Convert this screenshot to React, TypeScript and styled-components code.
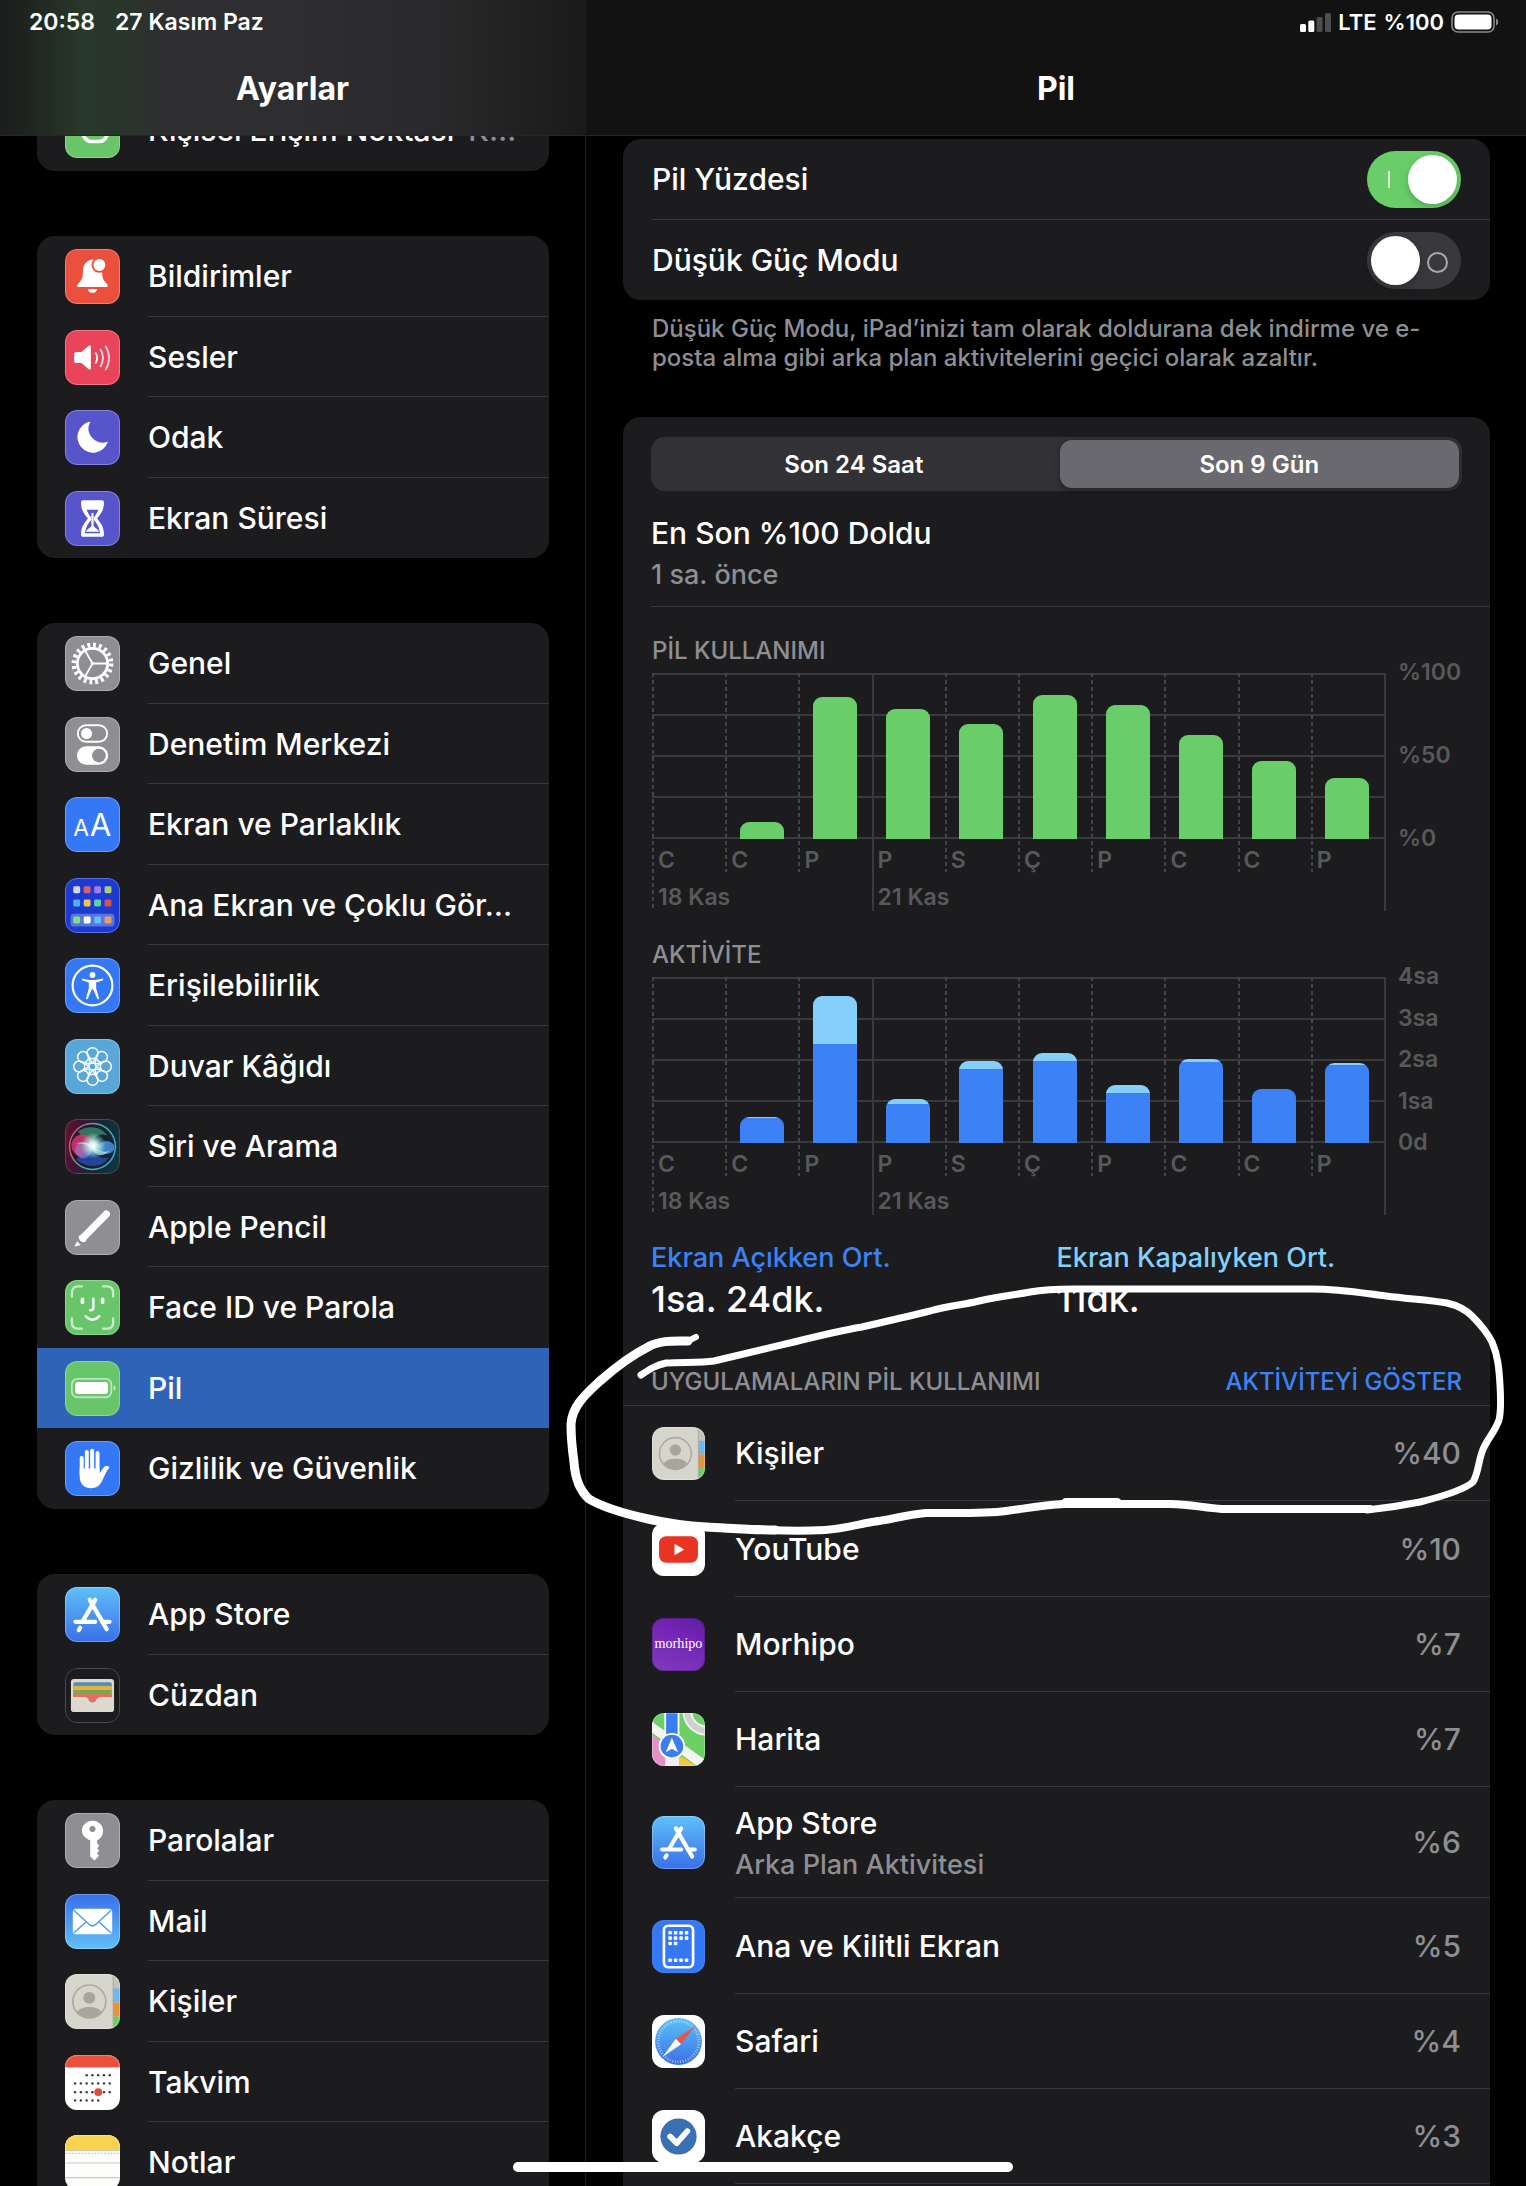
import React from "react";
import styled, { createGlobalStyle, css } from "styled-components";

const color = {
  card: "#1c1c1e",
  line: "#38383a",
  grey: "#8e8e93",
  dim: "#59595c",
  green: "#69ce6a",
  blue: "#3c82f6",
  sky: "#84cffb",
};

const GlobalStyle = createGlobalStyle`
  * { box-sizing: border-box; }
  body {
    margin: 0;
    background: #000;
    color: #fff;
    font-family: Inter, "Liberation Sans", sans-serif;
    font-weight: 550;
    -webkit-font-smoothing: antialiased;
  }
  h1, h2, h3, p, ul, dl, dd { margin: 0; padding: 0; font: inherit; }
  ul { list-style: none; }
  button { border: 0; background: none; padding: 0; font: inherit; cursor: pointer; }
  a { color: inherit; text-decoration: none; }
`;

/* ---------- frame ---------- */

const Screen = styled.div`
  position: relative;
  display: flex;
  height: 100vh;
  overflow: hidden;
`;

const Sidebar = styled.nav`
  position: relative;
  flex: 0 1 586px;
  min-width: 0;
  overflow: hidden;
  border-right: 1px solid #1f1f21;
`;

const Pane = styled.main`
  position: relative;
  flex: 1;
  min-width: 0;
  overflow: hidden;
`;

const Bar = styled.header`
  position: absolute;
  inset: 0 0 auto;
  z-index: 2;
  height: 136px;
  display: flex;
  flex-direction: column;
  border-bottom: 1px solid #262628;
`;

const SidebarBar = styled(Bar)`
  background: linear-gradient(
    to right,
    #1b1e1c 0,
    #1f2520 30px,
    #28382a 82px,
    #29362b 120px,
    #2e2f30 160px,
    #2e2e30 300px,
    #29292b 440px,
    #1f1f20 540px,
    #1a1a1b 100%
  );
`;

const PaneBar = styled(Bar)`
  background: #121212;
`;

const Status = styled.div<{ $end?: boolean }>`
  display: flex;
  align-items: center;
  height: 44px;
  padding: 0 27px 0 29px;
  gap: ${(p) => (p.$end ? 7 : 20)}px;
  justify-content: ${(p) => (p.$end ? "flex-end" : "flex-start")};
  font-size: ${(p) => (p.$end ? 22 : 23)}px;
  font-weight: 600;
`;

const BarTitle = styled.h1`
  flex: 1;
  padding-top: 26px;
  text-align: center;
  font-size: 32px;
  font-weight: 700;
  line-height: 38px;
`;

const Scroll = styled.div<{ $top: number }>`
  display: flex;
  flex-direction: column;
  padding: ${(p) => p.$top}px 36px 0 37px;
`;

const SidebarScroll = styled(Scroll)`
  gap: 65px;
`;

const Card = styled.ul`
  border-radius: 18px;
  background: ${color.card};
  overflow: hidden;
`;

/* ---------- rows ---------- */

const Body = styled.span<{ $line: boolean }>`
  display: flex;
  flex: 1;
  min-width: 0;
  align-self: stretch;
  align-items: center;
  padding-right: 29px;
  border-bottom: 1px solid ${(p) => (p.$line ? color.line : "transparent")};
`;

const Item = styled.li`
  height: 80px;
  &:nth-child(odd) {
    height: 81px;
  }
`;

const RowLink = styled.a<{ $active?: boolean }>`
  display: flex;
  align-items: center;
  gap: 28px;
  height: 100%;
  padding-left: 28px;
  font-size: 30px;
  line-height: 36px;
  background: ${(p) => (p.$active ? "#2e63b8" : "transparent")};
`;

const Label = styled.span`
  white-space: nowrap;
`;

const Hint = styled.span`
  margin-left: 14px;
  color: ${color.grey};
`;

const Tile = styled.span<{ $bg: string; $size: number; $rim?: string }>`
  position: relative;
  display: block;
  flex: none;
  width: ${(p) => p.$size}px;
  height: ${(p) => p.$size}px;
  border-radius: 12px;
  overflow: hidden;
  background: ${(p) => p.$bg};
  svg {
    display: block;
    width: 100%;
    height: 100%;
  }
  &::after {
    content: "";
    position: absolute;
    inset: 0;
    border-radius: inherit;
    border: 1px solid ${(p) => p.$rim ?? "rgba(255,255,255,0.28)"};
  }
`;

/* ---------- switches ---------- */

const ToggleRow = styled.label`
  display: flex;
  align-items: center;
  height: 80px;
  margin-left: 29px;
  padding-right: 29px;
  font-size: 30px;
  justify-content: space-between;
  cursor: pointer;
`;

const ToggleItem = styled.li`
  & + & ${ToggleRow} {
    height: 81px;
    border-top: 1px solid ${color.line};
  }
`;

const Switch = styled.input`
  appearance: none;
  position: relative;
  width: 94px;
  height: 57px;
  margin: 0;
  border-radius: 29px;
  background: #39393d;
  cursor: pointer;
  &::before {
    content: "";
    position: absolute;
    top: 20px;
    right: 13px;
    width: 17px;
    height: 17px;
    border: 2px solid #a9a9ad;
    border-radius: 50%;
  }
  &::after {
    content: "";
    position: absolute;
    top: 4px;
    left: 4px;
    width: 49px;
    height: 49px;
    border-radius: 50%;
    background: #fff;
    box-shadow: 0 3px 8px rgba(0, 0, 0, 0.2);
  }
  &:checked {
    background: ${color.green};
  }
  &:checked::before {
    left: 21px;
    right: auto;
    width: 2px;
    border: 0;
    border-radius: 0;
    background: #d9f5d9;
  }
  &:checked::after {
    left: 41px;
  }
`;

const Footnote = styled.p`
  margin: 14px 0 45px;
  padding: 0 29px;
  color: ${color.grey};
  font-size: 24px;
  line-height: 29px;
`;

/* ---------- battery card ---------- */

const Report = styled.section`
  padding: 20px 0 60px;
  border-radius: 18px 18px 0 0;
  background: ${color.card};
`;

const Inset = styled.div`
  padding: 0 28px 0 29px;
`;

const Segments = styled.div`
  display: flex;
  gap: 6px;
  height: 54px;
  margin: 0 28px;
  padding: 3px;
  border-radius: 14px;
  background: #323136;
`;

const Segment = styled.label`
  flex: 1;
  display: flex;
  align-items: center;
  justify-content: center;
  border-radius: 12px;
  font-size: 24px;
  font-weight: 600;
  cursor: pointer;
  &:has(input:checked) {
    background: #6a696f;
    box-shadow: 0 2px 6px rgba(0, 0, 0, 0.3);
  }
`;

const HiddenRadio = styled.input`
  appearance: none;
  width: 0;
  height: 0;
  margin: 0;
`;

const LastCharge = styled.div`
  margin-left: 28px;
  padding: 24px 0 16px;
  border-bottom: 1px solid ${color.line};
`;

const Strong = styled.h2`
  font-size: 30px;
  line-height: 36px;
`;

const Sub = styled.p`
  margin-top: 9px;
  color: ${color.grey};
  font-size: 27px;
  line-height: 30px;
`;

const Caption = styled.h3`
  color: ${color.grey};
  font-size: 24px;
  line-height: 24px;
`;

const Chart = styled.div`
  padding-top: 32px;
`;

const ChartGrid = styled.div`
  display: grid;
  grid-template-columns: 1fr 76px;
  margin-top: 10px;
`;

const Plot = styled.div`
  display: grid;
  grid-template-columns: repeat(10, 1fr);
  align-items: start;
  height: 238px;
  border-right: 2px solid #3a3a3c;
  background: repeating-linear-gradient(to bottom, #3a3a3c 0 2px, transparent 2px 41px) 0 0 / 100% 166px no-repeat;
`;

const solidRule = css`
  background: linear-gradient(#3a3a3c, #3a3a3c) 0 0 / 2px 100% no-repeat;
`;
const dashedRule = css`
  background: repeating-linear-gradient(to bottom, #454548 0 4px, transparent 4px 7px) 0 0 / 2px 100% no-repeat;
`;

const Day = styled.div<{ $tall: boolean; $solid: boolean }>`
  min-width: 0;
  height: ${(p) => (p.$tall ? 238 : 199)}px;
  color: ${color.dim};
  font-size: 23px;
  font-weight: 600;
  white-space: nowrap;
  ${(p) => (p.$solid ? solidRule : dashedRule)}
`;

const Slot = styled.div`
  display: flex;
  align-items: flex-end;
  justify-content: center;
  height: 166px;
  margin-bottom: 8px;
`;

const Stack = styled.div`
  width: 60%;
  border-radius: 9px 9px 0 0;
  overflow: hidden;
`;

const DayName = styled.div`
  padding-left: 6px;
  line-height: 26px;
`;

const DayDate = styled(DayName)`
  margin-top: 11px;
`;

const Axis = styled.div`
  display: flex;
  flex-direction: column;
  justify-content: space-between;
  height: 190px;
  margin-top: -13px;
  padding-left: 12px;
  color: ${color.dim};
  font-size: 23px;
  font-weight: 600;
  line-height: 24px;
`;

const Averages = styled.dl`
  display: grid;
  grid-template-columns: 1fr 1fr;
  padding: 28px 28px 0;
`;

const AverageName = styled.dt<{ $tone: string }>`
  color: ${(p) => p.$tone};
  font-size: 27px;
  line-height: 30px;
`;

const AverageValue = styled.dd`
  margin-top: 8px;
  font-size: 36px;
  line-height: 36px;
`;

const UsageHead = styled.div`
  display: flex;
  justify-content: space-between;
  margin-top: 53px;
  padding: 0 28px 11px;
  border-bottom: 1px solid ${color.line};
`;

const TextButton = styled.button`
  color: ${color.blue};
  font-size: 24px;
  line-height: 24px;
`;

const AppRow = styled.li<{ $tall: boolean }>`
  display: flex;
  align-items: center;
  gap: 30px;
  height: ${(p) => (p.$tall ? 111 : 95)}px;
  padding-left: 29px;
  font-size: 30px;
  line-height: 36px;
  &:nth-child(4n + 2) {
    height: 96px;
  }
`;

const AppText = styled.span`
  flex: 1;
  min-width: 0;
`;

const Share = styled.span`
  color: ${color.grey};
`;

const HomeBar = styled.div`
  position: absolute;
  z-index: 4;
  bottom: 14px;
  left: 50%;
  width: 500px;
  height: 10px;
  margin-left: -250px;
  border-radius: 5px;
  background: #fff;
`;

const Marker = styled.svg`
  position: absolute;
  z-index: 3;
  top: 1270px;
  left: 560px;
  width: 960px;
  height: 280px;
  pointer-events: none;
  fill: none;
  stroke: #fff;
  stroke-linecap: round;
  stroke-linejoin: round;
`;

/* ---------- icons, each on a 60 x 60 field ---------- */

type Art = { bg: string; rim?: string; art: React.ReactNode };

const dots = (points: number[][], fill: string, r: number) =>
  points.map(([x, y]) => <circle key={`${x}-${y}`} cx={x} cy={y} r={r} fill={fill} />);

const homeDots = [
  ["#d5d6e6", "#d7607f", "#a877f2", "#a8cf69"],
  ["#4fb0f0", "#f2c255", "#62cfa8", "#dd5148"],
  ["#7fe08a", "#ffffff", "#62c3fa", "#eb9f62"],
];

const calendarDots: number[][] = [];
[
  [22, [2, 3, 4, 5, 6]],
  [31, [0, 1, 2, 3, 4, 5, 6]],
  [40.5, [0, 1, 2, 3, 5, 6]],
  [49.5, [0, 1, 2, 3, 4]],
].forEach(([y, cols]) => (cols as number[]).forEach((c) => calendarDots.push([11 + c * 6.3, y as number])));

const icons: Record<string, Art> = {
  hotspot: {
    bg: "#68c56a",
    art: (
      <g fill="none" stroke="#fff" strokeWidth="4" strokeLinecap="round">
        <rect x="20" y="24" width="26" height="18" rx="9" />
        <rect x="14" y="16" width="26" height="18" rx="9" />
      </g>
    ),
  },
  bell: {
    bg: "#eb4f3e",
    art: (
      <g fill="#fff">
        <path d="M30 11.5c-6.5 1-10.5 6-10.5 12.500c0 7-.8 9.500-4.500 13.300-1.200 1.200-1.700 2-1.700 2.800 0 .9.700 1.400 1.600 1.400h30.200c.9 0 1.600-.5 1.600-1.400 0-.8-.5-1.600-1.700-2.800-3.700-3.800-4.500-6.300-4.500-13.300 0-6.500-4-11.500-10.500-12.500z" />
        <path d="M25 43.500h10c-.4 2.700-2.500 4.300-5 4.300s-4.600-1.600-5-4.300z" />
        <circle cx="37.500" cy="17.500" r="8.500" fill="#eb4f3e" />
        <circle cx="37.500" cy="17.500" r="6.500" />
      </g>
    ),
  },
  sound: {
    bg: "#ea445a",
    art: (
      <g>
        <path d="M10 26.500c0-1.500.8-2.500 2.500-2.500h5.500l7.500-6.500c1.500-1.200 2.700-.6 2.700 1v23c0 1.600-1.200 2.200-2.700 1l-7.500-6.500h-5.500c-1.700 0-2.500-1-2.500-2.500z" fill="#fff" />
        <g fill="none" stroke="#fff" strokeWidth="2" strokeLinecap="round">
          <path d="M33.500 25c2 3 2 8 0 11" opacity=".95" />
          <path d="M38.800 21.500c3.500 5 3.500 13 0 18" opacity=".85" />
          <path d="M44.500 18c4.700 7.500 4.700 17.500 0 25" opacity=".75" />
        </g>
      </g>
    ),
  },
  moon: {
    bg: "#5855cb",
    art: <path d="M27.300 13.300c.6-.3.4-.6-.4-.4A17 17 0 1 0 46.500 35.500c.4-.9 0-1-.8-.6A15.500 15.500 0 0 1 27.300 13.300z" fill="#fff" />,
  },
  hourglass: {
    bg: "#5855cb",
    art: (
      <g>
        <path d="M20 10h20c1.600 0 2.500 1 2.500 2.400 0 7.600-2.500 11.500-7.500 17.600 5 6.100 7.500 10 7.500 17.600 0 1.400-.9 2.400-2.500 2.400h-20c-1.600 0-2.500-1-2.500-2.400 0-7.600 2.500-11.500 7.500-17.600-5-6.100-7.500-10-7.500-17.600 0-1.400.9-2.400 2.500-2.400z" fill="#fff" />
        <path d="M23.500 20.500h13c-1.200 3-3 6-5 8.500v2.500c3.500 4 6 8 6.700 14.500h-16.400c.7-6.500 3.200-10.500 6.700-14.500v-2.500c-2-2.500-3.800-5.500-5-8.500z" fill="#5855cb" />
        <path d="M28.800 24h2.400v14c1 2.500 5 3.500 6 6.500h-14.400c1-3 5-4 6-6.500z" fill="#fff" />
      </g>
    ),
  },
  gear: {
    bg: "#8e8e93",
    art: (
      <g fill="none" stroke="#fff">
        <circle cx="30" cy="30" r="16.500" strokeWidth="3" />
        <circle cx="30" cy="30" r="20.300" strokeWidth="5" strokeDasharray="3.190 3.188" />
        <g strokeWidth="2">
          <path d="M30 30h16M30 30l-8-14M30 30l-8 14" />
        </g>
        <circle cx="30" cy="30" r="2" fill="#fff" stroke="none" />
      </g>
    ),
  },
  control: {
    bg: "#8e8e93",
    art: (
      <g>
        <rect x="14" y="9" width="32" height="18" rx="9" fill="none" stroke="#fff" strokeWidth="2" />
        <circle cx="23.500" cy="18" r="6" fill="#fff" />
        <rect x="13" y="32" width="34" height="20" rx="10" fill="#fff" />
        <circle cx="37" cy="42" r="7.500" fill="#8e8e93" />
      </g>
    ),
  },
  display: {
    bg: "#3478f6",
    art: (
      <g fill="#fff" fontFamily="Inter, sans-serif" fontWeight="400">
        <text x="9" y="43" fontSize="25">A</text>
        <text x="27" y="43" fontSize="34">A</text>
      </g>
    ),
  },
  home: {
    bg: "#1d3bd1",
    art: (
      <g>
        <rect x="6" y="39" width="48" height="14" rx="4" fill="#5a75de" />
        {homeDots.map((row, r) =>
          row.map((fill, c) => (
            <rect key={`${r}${c}`} x={9 + c * 11.400} y={[9, 23.500, 42][r]} width="7.500" height="7.500" rx="1.500" fill={fill} />
          )),
        )}
      </g>
    ),
  },
  access: {
    bg: "#3478f6",
    art: (
      <g>
        <circle cx="30" cy="30" r="21.700" fill="none" stroke="#fff" strokeWidth="2.400" />
        <circle cx="30" cy="18.500" r="3.200" fill="#fff" />
        <path d="M19.500 22.500l7.500 1.500h6l7.500-1.500c1.400-.2 1.700 1.600.3 2l-6.800 2.200v6.300l3 10.500c.4 1.500-1.500 2-2 .7l-4.300-10.200h-1.400l-4.300 10.200c-.5 1.300-2.400.8-2-.7l3-10.500v-6.300l-6.800-2.200c-1.400-.4-1.100-2.200.3-2z" fill="#fff" />
      </g>
    ),
  },
  wallpaper: {
    bg: "#58a7d8",
    art: (
      <g fill="none" stroke="#fff" strokeWidth="1.600">
        {[0, 45, 90, 135, 180, 225, 270, 315].map((a) => (
          <g key={a} transform={`rotate(${a} 30 30)`}>
            <circle cx="30" cy="15.500" r="6" />
            <path d="M30 26l-4.500-6.500M30 26l4.500-6.500" />
          </g>
        ))}
        <circle cx="30" cy="30" r="3.800" />
      </g>
    ),
  },
  siri: {
    bg: "linear-gradient(100deg, #6d1030 0%, #3a1436 28%, #14293a 62%, #0d3a42 100%)",
    rim: "#4a4a50",
    art: (
      <g>
        <defs>
          <radialGradient id="siriCore">
            <stop offset="0" stopColor="#fff" />
            <stop offset=".3" stopColor="#dff" stopOpacity=".9" />
            <stop offset="1" stopColor="#8fd" stopOpacity="0" />
          </radialGradient>
          <linearGradient id="siriRing" x1="0" y1=".2" x2="1" y2=".6">
            <stop offset="0" stopColor="#e0486c" />
            <stop offset=".5" stopColor="#4fb58d" />
            <stop offset="1" stopColor="#4aa5d8" />
          </linearGradient>
        </defs>
        <circle cx="30" cy="30" r="25" fill="#12202c" fillOpacity=".6" stroke="url(#siriRing)" strokeWidth="1.600" />
        <path d="M14 14c10-8 26-6 32 4-9-3-14 0-17 12z" fill="#3e9a77" opacity=".7" />
        <ellipse cx="19" cy="29" rx="12" ry="12" fill="#d83470" opacity=".85" />
        <ellipse cx="45" cy="31" rx="9" ry="7" fill="#4a8fe6" opacity=".85" />
        <path d="M12 44c8 8 26 12 36-2-10 2-14-2-18-10z" fill="#2b58d0" opacity=".65" />
        <ellipse cx="20" cy="34" rx="9" ry="9" fill="#8ea4e8" opacity=".45" />
        <path d="M11 27c10-3 16 0 20 3 6 4 10 8 18 4-8 9-16 6-20-2-4-4-10-6-18-5z" fill="#dff" opacity=".6" />
        <circle cx="31" cy="29" r="14" fill="url(#siriCore)" />
      </g>
    ),
  },
  pencil: {
    bg: "#8e8e93",
    art: (
      <g fill="#fff">
        <path d="M19.500 41.500L45 15.500" stroke="#fff" strokeWidth="8" strokeLinecap="round" />
        <path d="M14.500 40.500l2-3 7 7-3.200 1.800z" />
        <path d="M13.200 45l4 4-5.700 1.700c-.7.100-1-.2-.8-.9z" />
      </g>
    ),
  },
  face: {
    bg: "#68c56a",
    art: (
      <g fill="none" stroke="#fff" strokeLinecap="round">
        <g strokeWidth="2.600" opacity=".65">
          <path d="M7.500 18v-4q0-7 7-7h4M41.500 7h4q7 0 7 7v4M52.500 42v4q0 7-7 7h-4M18.500 53h-4q-7 0-7-7v-4" />
        </g>
        <path d="M19 21v3.500M41 21v3.500" strokeWidth="4" />
        <path d="M31 20.500v9.500q0 3-3.500 3" strokeWidth="2.600" />
        <path d="M22.500 39.500q7.500 7.500 15 0" strokeWidth="2.600" />
      </g>
    ),
  },
  battery: {
    bg: "#68c56a",
    art: (
      <g>
        <rect x="7.500" y="19.500" width="43" height="20" rx="6" fill="none" stroke="#fff" strokeOpacity=".55" strokeWidth="2" />
        <rect x="11" y="23" width="36" height="13" rx="3" fill="#fff" />
        <path d="M53 26.500c3 1 3 5 0 6z" fill="#fff" opacity=".6" />
      </g>
    ),
  },
  hand: {
    bg: "#3478f6",
    art: (
      <g>
        <path d="M18.200 18.500v18M23.800 12v20M29.600 10.500v20M35.500 13v20" stroke="#fff" strokeWidth="4.300" strokeLinecap="round" />
        <path d="M16 30h21.600v5c1.800-1.600 3.300-4.500 5.200-6.800 1.500-1.600 4.800-1.200 5.400.3.300.8-.4 1.300-1 2-3.200 4-4.700 9.300-7.200 14-2.600 4.800-6 7-11.500 7-8.500 0-12.500-5.500-12.500-13z" fill="#fff" />
      </g>
    ),
  },
  store: {
    bg: "linear-gradient(#5fc0f8, #3a6fe8)",
    art: (
      <g stroke="#fff" strokeWidth="4.600" strokeLinecap="round" fill="none">
        <path d="M27 14l18.500 32" />
        <path d="M33 14L19.500 37" />
        <path d="M16.500 44.500L15 47" />
        <path d="M11.500 38h21.500M40.500 38h8" />
      </g>
    ),
  },
  wallet: {
    bg: "#1c1c1e",
    rim: "#4a4a4d",
    art: (
      <g>
        <rect x="6.500" y="12" width="47" height="36" rx="3.500" fill="#dcdad0" />
        <rect x="9" y="15.500" width="42" height="10" rx="2" fill="#4f8fb8" />
        <rect x="9" y="19.500" width="42" height="8" fill="#e8b03c" />
        <rect x="9" y="24" width="42" height="8" fill="#6fae50" />
        <rect x="9" y="28" width="42" height="5" fill="#e07060" />
        <path d="M6.500 31.500h13c3.500 0 5 0 6 2.500.9 2.400 2.500 3.500 4.500 3.500s3.600-1.100 4.500-3.500c1-2.500 2.500-2.500 6-2.500h13v13q0 3.500-3.500 3.500h-40q-3.500 0-3.500-3.500z" fill="#dcdad0" />
        <path d="M19 31.500c3.500 0 5.500 0 6.500 2.500.9 2.400 2.500 3.500 4.500 3.500s3.600-1.100 4.500-3.500c1-2.500 3-2.500 6.500-2.500z" fill="#e07060" />
      </g>
    ),
  },
  key: {
    bg: "#8e8e93",
    art: (
      <g>
        <path d="M30 8.500c6.600 0 11.500 4.700 11.500 11 0 4.700-2.500 8.500-6.500 10.200v3.300l2.500 2.700-2.500 2.800 2.300 2.700-2.600 3 2.500 2.500-5 5-4.700-4.300v-17.700c-4.500-1.700-9-5.500-9-10.200 0-6.300 4.900-11 11.500-11z" fill="#fff" />
        <circle cx="30" cy="17.500" r="3.300" fill="#8e8e93" />
      </g>
    ),
  },
  mail: {
    bg: "linear-gradient(#3a6fe8, #5fc0f8)",
    art: (
      <g>
        <rect x="8.500" y="16" width="43" height="28" rx="3.500" fill="#fff" />
        <path d="M9.500 17.500l16 15q4.500 4.500 9 0l16-15M9.500 42.500l14-12.500M50.500 42.500l-14-12.500" fill="none" stroke="#4f9bf0" strokeWidth="1.600" />
      </g>
    ),
  },
  contacts: {
    bg: "#d6d5cb",
    art: (
      <g>
        <rect x="52.500" width="8" height="15.500" fill="#c3c2b9" />
        <rect x="52.500" y="15.500" width="8" height="15.500" fill="#6db8ee" />
        <rect x="52.500" y="31" width="8" height="15.500" fill="#e8923a" />
        <rect x="52.500" y="46.500" width="8" height="14" fill="#6ace66" />
        <path d="M52.500 0v60" stroke="#a9a79e" strokeWidth="1" />
        <circle cx="26.500" cy="30" r="18" fill="none" stroke="#aeaaa2" strokeWidth="1.800" />
        <circle cx="26.500" cy="26" r="6.500" fill="#a9a49c" />
        <path d="M13 41.500c3-4 8-5.500 13.500-5.500s10.500 1.500 13.500 5.500c-3.500 4.200-8 6.500-13.500 6.500s-10-2.300-13.500-6.500z" fill="#a9a49c" />
      </g>
    ),
  },
  calendar: {
    bg: "#fff",
    art: (
      <g>
        <rect width="60" height="13.500" fill="#eb4f3e" />
        {dots(calendarDots, "#333", 1.3)}
        <circle cx="36.300" cy="40.500" r="4.200" fill="#e0483a" />
      </g>
    ),
  },
  notes: {
    bg: "#fdfdfb",
    art: (
      <g>
        <rect width="60" height="16" fill="#f8d34f" />
        <path d="M0 16.500h60" stroke="#b9a86a" strokeWidth="1" />
        <path d="M1 20h58" stroke="#bbb" strokeWidth="1.500" strokeDasharray="1.500 2" />
        <path d="M0 30.500h60M0 46.500h60" stroke="#c9c9c9" strokeWidth="1.200" />
      </g>
    ),
  },
  youtube: {
    bg: "#fff",
    art: (
      <g>
        <rect x="8" y="15" width="44" height="30" rx="8" fill="#e93323" />
        <path d="M25.500 23.500l11 6.500-11 6.500z" fill="#fff" />
      </g>
    ),
  },
  morhipo: {
    bg: "linear-gradient(205deg, #5b1fa0, #7524b5 35%, #7f3bbd)",
    rim: "rgba(0,0,0,0.15)",
    art: (
      <text x="30" y="34" fill="#fff" fontSize="16" fontWeight="400" fontFamily="Liberation Serif, serif" textAnchor="middle">
        morhipo
      </text>
    ),
  },
  maps: {
    bg: "#6bd165",
    art: (
      <g>
        <path d="M0 24l30 26v10h-30z" fill="#e58fc4" />
        <path d="M0 10l60 43v7h-9l-51-38z" fill="#f4f3f1" />
        <path d="M15 40h16v20h-16z" fill="#f1eff0" />
        <path d="M31 50h4l15 10h-19z" fill="#f4c73f" />
        <circle cx="62" cy="-2" r="22" fill="none" stroke="#f4f3f1" strokeWidth="11" />
        <circle cx="62" cy="-2" r="22" fill="none" stroke="#cfd0d2" strokeWidth="7" />
        <rect x="14" y="-2" width="17" height="30" fill="#fff" />
        <rect x="16" y="-2" width="13" height="30" fill="#3b7ef4" />
        <circle cx="22.500" cy="37.500" r="15" fill="#fff" />
        <circle cx="22.500" cy="37.500" r="12.800" fill="#3b7ef4" />
        <path d="M22.500 28l7 16.500-7-4-7 4z" fill="#fff" />
      </g>
    ),
  },
  lock: {
    bg: "#3478f6",
    rim: "#4080f0",
    art: (
      <g>
        <rect x="13.500" y="6.500" width="33" height="47" rx="5" fill="none" stroke="#fff" strokeWidth="3" />
        {[12.5, 18.5, 24.5, 43.5].map((y, r) =>
          [0, 1, 2, 3]
            .slice(0, r === 2 ? 2 : 4)
            .map((c) => <rect key={`${y}${c}`} x={18.5 + c * 6.2} y={y} width="4" height="4" rx="1" fill="#fff" />),
        )}
      </g>
    ),
  },
  safari: {
    bg: "#fff",
    art: (
      <g>
        <defs>
          <linearGradient id="safariDial" x1="0" y1="0" x2="0" y2="1">
            <stop offset="0" stopColor="#5cc1f7" />
            <stop offset="1" stopColor="#3b6fe6" />
          </linearGradient>
        </defs>
        <circle cx="30" cy="30" r="26.500" fill="url(#safariDial)" />
        <circle cx="30" cy="30" r="23" fill="none" stroke="#fff" strokeOpacity=".55" strokeWidth="3" strokeDasharray="1 2" />
        <path d="M49 12.500L32.800 33.200 27 27z" fill="#e5554b" />
        <path d="M12 47.500L27 27l5.800 6.200z" fill="#fff" />
      </g>
    ),
  },
  akakce: {
    bg: "#fff",
    art: (
      <g>
        <circle cx="30" cy="30" r="20.500" fill="#3a6fb2" />
        <path d="M20.500 30l7.500 7.500L40 24" fill="none" stroke="#fff" strokeWidth="6.500" strokeLinecap="round" strokeLinejoin="round" />
      </g>
    ),
  },
};

function Icon({ name, size }: { name: string; size: number }) {
  const { bg, rim, art } = icons[name];
  return (
    <Tile $bg={bg} $rim={rim} $size={size}>
      <svg viewBox="0 0 60 60" aria-hidden="true">
        {art}
      </svg>
    </Tile>
  );
}

/* ---------- data ---------- */

const groups: { icon: string; label: string; hint?: string }[][] = [
  [{ icon: "hotspot", label: "Kişisel Erişim Noktası", hint: "K…" }],
  [
    { icon: "bell", label: "Bildirimler" },
    { icon: "sound", label: "Sesler" },
    { icon: "moon", label: "Odak" },
    { icon: "hourglass", label: "Ekran Süresi" },
  ],
  [
    { icon: "gear", label: "Genel" },
    { icon: "control", label: "Denetim Merkezi" },
    { icon: "display", label: "Ekran ve Parlaklık" },
    { icon: "home", label: "Ana Ekran ve Çoklu Gör…" },
    { icon: "access", label: "Erişilebilirlik" },
    { icon: "wallpaper", label: "Duvar Kâğıdı" },
    { icon: "siri", label: "Siri ve Arama" },
    { icon: "pencil", label: "Apple Pencil" },
    { icon: "face", label: "Face ID ve Parola" },
    { icon: "battery", label: "Pil" },
    { icon: "hand", label: "Gizlilik ve Güvenlik" },
  ],
  [
    { icon: "store", label: "App Store" },
    { icon: "wallet", label: "Cüzdan" },
  ],
  [
    { icon: "key", label: "Parolalar" },
    { icon: "mail", label: "Mail" },
    { icon: "contacts", label: "Kişiler" },
    { icon: "calendar", label: "Takvim" },
    { icon: "notes", label: "Notlar" },
  ],
];

const days = ["C", "C", "P", "P", "S", "Ç", "P", "C", "C", "P"];
const dates: Record<number, string> = { 0: "18 Kas", 3: "21 Kas" };

const level = [0, 10, 86, 79, 70, 87, 81, 63, 47, 37].map((v) => [v]);

/* minutes with the screen off, then on */
const activity = [
  [0, 0],
  [1, 37],
  [70, 144],
  [7, 57],
  [12, 107],
  [11, 119],
  [11, 72],
  [5, 118],
  [0, 79],
  [3, 113],
];

const apps = [
  { icon: "contacts", name: "Kişiler", share: "%40" },
  { icon: "youtube", name: "YouTube", share: "%10" },
  { icon: "morhipo", name: "Morhipo", share: "%7" },
  { icon: "maps", name: "Harita", share: "%7" },
  { icon: "store", name: "App Store", note: "Arka Plan Aktivitesi", share: "%6" },
  { icon: "lock", name: "Ana ve Kilitli Ekran", share: "%5" },
  { icon: "safari", name: "Safari", share: "%4" },
  { icon: "akakce", name: "Akakçe", share: "%3" },
];

function BarChart(props: { title: string; data: number[][]; max: number; tones: string[]; ticks: string[] }) {
  const { title, data, max, tones, ticks } = props;
  return (
    <Chart>
      <Caption>{title}</Caption>
      <ChartGrid>
        <Plot>
          {data.map((parts, i) => (
            <Day key={i} $tall={i in dates} $solid={i === 3}>
              <Slot>
                <Stack>
                  {parts.map((v, k) => (
                    <div key={k} style={{ height: Math.round((v / max) * 165), background: tones[k] }} />
                  ))}
                </Stack>
              </Slot>
              <DayName>{days[i]}</DayName>
              {i in dates && <DayDate>{dates[i]}</DayDate>}
            </Day>
          ))}
        </Plot>
        <Axis>
          {ticks.map((t) => (
            <span key={t}>{t}</span>
          ))}
        </Axis>
      </ChartGrid>
    </Chart>
  );
}

export default function App() {
  return (
    <>
      <GlobalStyle />
      <Screen>
        <Sidebar aria-label="Ayarlar">
          <SidebarBar>
            <Status>
              <span>20:58</span>
              <span>27 Kasım Paz</span>
            </Status>
            <BarTitle>Ayarlar</BarTitle>
          </SidebarBar>
          <SidebarScroll $top={90}>
            {groups.map((rows, g) => (
              <Card key={g}>
                {rows.map((row, i) => {
                  const active = row.icon === "battery";
                  const line = i < rows.length - 1 && !active && rows[i + 1].icon !== "battery";
                  return (
                    <Item key={row.label}>
                      <RowLink href="#" $active={active} aria-current={active ? "page" : undefined}>
                        <Icon name={row.icon} size={55} />
                        <Body $line={line}>
                          <Label>{row.label}</Label>
                          {row.hint && <Hint>{row.hint}</Hint>}
                        </Body>
                      </RowLink>
                    </Item>
                  );
                })}
              </Card>
            ))}
          </SidebarScroll>
        </Sidebar>

        <Pane>
          <PaneBar>
            <Status $end>
              <svg width="31" height="19" viewBox="0 0 31 19" fill="#fff" aria-hidden="true">
                <rect y="11" width="6" height="8" rx="1.500" />
                <rect x="8.300" y="7.500" width="6" height="11.500" rx="1.500" />
                <rect x="16.600" y="4" width="6" height="15" rx="1.500" opacity=".25" />
                <rect x="25" width="6" height="19" rx="1.500" opacity=".25" />
              </svg>
              <span>LTE</span>
              <span>%100</span>
              <svg width="48" height="22" viewBox="0 0 48 22" fill="#fff" aria-hidden="true">
                <rect x="1" y="1" width="42" height="20" rx="6" fill="none" stroke="#8a8a8a" strokeWidth="1.600" />
                <rect x="3.500" y="3.500" width="37" height="15" rx="4" />
                <path d="M45 7.500c3 1.200 3 5.800 0 7z" opacity=".5" />
              </svg>
            </Status>
            <BarTitle>Pil</BarTitle>
          </PaneBar>

          <Scroll $top={139}>
            <Card>
              <ToggleItem>
                <ToggleRow>
                  Pil Yüzdesi
                  <Switch type="checkbox" role="switch" defaultChecked />
                </ToggleRow>
              </ToggleItem>
              <ToggleItem>
                <ToggleRow>
                  Düşük Güç Modu
                  <Switch type="checkbox" role="switch" />
                </ToggleRow>
              </ToggleItem>
            </Card>
            <Footnote>
              Düşük Güç Modu, iPad’inizi tam olarak doldurana dek indirme ve e-posta alma gibi arka plan aktivitelerini
              geçici olarak azaltır.
            </Footnote>

            <Report>
              <Segments role="radiogroup" aria-label="Dönem">
                <Segment>
                  <HiddenRadio type="radio" name="period" />
                  Son 24 Saat
                </Segment>
                <Segment>
                  <HiddenRadio type="radio" name="period" defaultChecked />
                  Son 9 Gün
                </Segment>
              </Segments>
              <LastCharge>
                <Strong>En Son %100 Doldu</Strong>
                <Sub>1 sa. önce</Sub>
              </LastCharge>
              <Inset>
                <BarChart title="PİL KULLANIMI" data={level} max={100} tones={[color.green]} ticks={["%100", "%50", "%0"]} />
                <BarChart
                  title="AKTİVİTE"
                  data={activity}
                  max={240}
                  tones={[color.sky, color.blue]}
                  ticks={["4sa", "3sa", "2sa", "1sa", "0d"]}
                />
              </Inset>
              <Averages>
                <div>
                  <AverageName $tone={color.blue}>Ekran Açıkken Ort.</AverageName>
                  <AverageValue>1sa. 24dk.</AverageValue>
                </div>
                <div>
                  <AverageName $tone={color.sky}>Ekran Kapalıyken Ort.</AverageName>
                  <AverageValue>11dk.</AverageValue>
                </div>
              </Averages>
              <UsageHead>
                <Caption>UYGULAMALARIN PİL KULLANIMI</Caption>
                <TextButton type="button">AKTİVİTEYİ GÖSTER</TextButton>
              </UsageHead>
              <ul>
                {apps.map((app) => (
                  <AppRow key={app.name} $tall={!!app.note}>
                    <Icon name={app.icon} size={53} />
                    <Body $line>
                      <AppText>
                        {app.name}
                        {app.note && <Sub>{app.note}</Sub>}
                      </AppText>
                      <Share>{app.share}</Share>
                    </Body>
                  </AppRow>
                ))}
              </ul>
            </Report>
          </Scroll>
        </Pane>

        <Marker viewBox="560 1270 960 280" aria-hidden="true">
          <path
            strokeWidth="7"
            d="M641 1375C650 1369 656 1365 666 1363C684 1362 700 1363 714 1361C744 1354 768 1348 794 1342C818 1336 838 1331 862 1327C888 1321 906 1317 930 1311C948 1306 962 1305 979 1301C1000 1296 1015 1295 1030 1292C1046 1289 1060 1289 1075 1289H1312C1340 1289 1362 1293 1386 1296C1410 1299 1430 1300 1447 1303C1460 1306 1466 1310 1472 1316C1482 1326 1488 1334 1492 1342C1498 1356 1499 1368 1500 1385C1501 1402 1501 1412 1499 1420C1494 1434 1486 1440 1482 1452C1478 1464 1478 1474 1473 1482C1464 1490 1440 1497 1420 1502C1400 1506 1386 1508 1367 1510"
          />
          <path
            strokeWidth="8"
            d="M1370 1509H1222C1204 1508 1190 1504 1170 1504H1065C1044 1505 1028 1508 1006 1511C984 1514 950 1513 926 1513C904 1515 890 1520 872 1522C856 1525 842 1529 825 1530C806 1531 790 1531 769 1530"
          />
          <path
            strokeWidth="9"
            d="M775 1530C752 1530 728 1528 706 1527C684 1526 666 1523 648 1519C626 1514 604 1508 589 1499C579 1490 575 1478 574 1462C572 1448 571 1436 571 1424C572 1406 586 1394 600 1381C616 1367 632 1355 648 1347C660 1340 674 1341 688 1341"
          />
          <path strokeWidth="6" d="M688 1341L696 1337" />
          <path strokeWidth="10" d="M1066 1503H1117" />
        </Marker>
        <HomeBar />
      </Screen>
    </>
  );
}
